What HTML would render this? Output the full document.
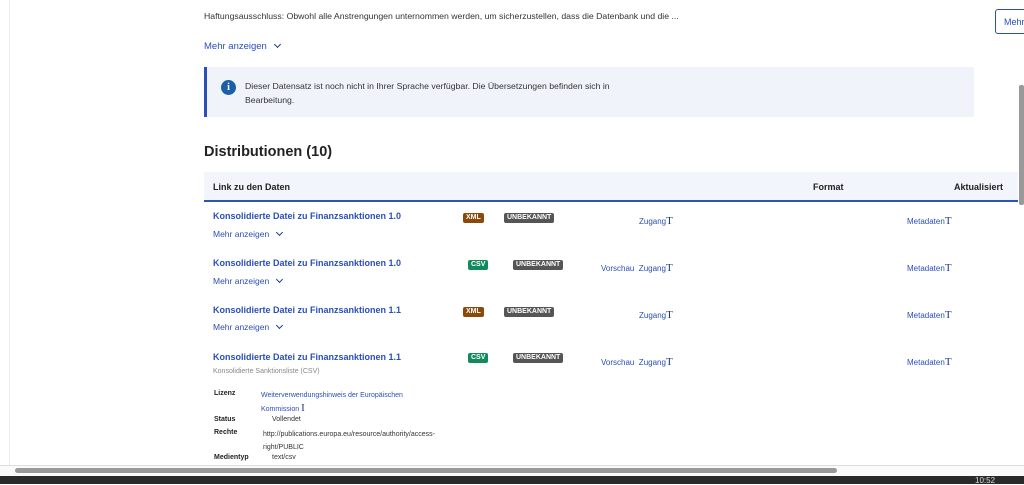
<!DOCTYPE html>
<html><head><meta charset="utf-8"><style>
*{margin:0;padding:0;box-sizing:border-box}
body{width:1024px;height:484px;overflow:hidden;background:#fff;font-family:"Liberation Sans",sans-serif;position:relative;color:#222}
.a{position:absolute;white-space:nowrap}
.lnk{color:#2a4fb8}
.t{font-size:8px;color:#2a4fb8}
.ttl{font-size:9px;font-weight:bold;color:#2a4fb8}
.bdg{font-size:7px;font-weight:bold;color:#fff;border-radius:2px;padding:1px 3px;line-height:8px}
.xml{background:#8a4a0c}.csv{background:#138a5e}.unk{background:#555}
.chev{display:inline-block;width:5px;height:5px;border-right:1.5px solid #1d3a8a;border-bottom:1.5px solid #1d3a8a;transform:rotate(45deg);margin-left:8px;position:relative;top:-2px}
.cur{font-family:"Liberation Serif",serif;font-size:11px;color:#1d3a8a}
.lbl{font-size:7px;font-weight:bold;color:#222}
.val{font-size:7px;color:#333}
</style></head><body>
<div class="a" style="left:9px;top:0;width:1px;height:466px;background:#eee"></div>
<div class="a" style="left:204px;top:11px;font-size:8.7px;color:#333">Haftungsausschluss: Obwohl alle Anstrengungen unternommen werden, um sicherzustellen, dass die Datenbank und die ...</div>
<div class="a" style="left:995px;top:9px;width:40px;height:25px;border:1.5px solid #2a4fb8;border-radius:3px;font-size:9px;color:#2a4fb8;padding:7px 0 0 8px">Mehr</div>
<div class="a lnk" style="left:204px;top:41px;font-size:9.5px">Mehr anzeigen<span class="chev"></span></div>
<div class="a" style="left:204px;top:67px;width:770px;height:50px;background:#f0f4fa;border-left:3px solid #2a4fb8"></div>
<div class="a" style="left:221px;top:80px;width:15px;height:15px;border-radius:50%;background:#1a5fa8;color:#fff;font-size:10px;font-weight:bold;text-align:center;line-height:15px;font-family:'Liberation Serif',serif">i</div>
<div class="a" style="left:245px;top:79px;font-size:8.7px;color:#333;line-height:14px">Dieser Datensatz ist noch nicht in Ihrer Sprache verfügbar. Die Übersetzungen befinden sich in<br>Bearbeitung.</div>
<div class="a" style="left:204px;top:144px;font-size:14.5px;font-weight:bold;color:#222">Distributionen (10)</div>
<div class="a" style="left:204px;top:172px;width:814px;height:30px;background:#f2f5fb;border-bottom:2px solid #2a56b8"></div>
<div class="a" style="left:213px;top:182px;font-size:9px;font-weight:bold">Link zu den Daten</div>
<div class="a" style="left:813px;top:182px;font-size:9px;font-weight:bold">Format</div>
<div class="a" style="left:954px;top:182px;font-size:9px;font-weight:bold">Aktualisiert</div>

<div class="a ttl" style="left:213px;top:211px">Konsolidierte Datei zu Finanzsanktionen 1.0</div>
<div class="a bdg xml" style="left:463px;top:213px">XML</div>
<div class="a bdg unk" style="left:504px;top:213px">UNBEKANNT</div>
<div class="a t" style="left:639px;top:215px">Zugang<span class="cur">T</span></div>
<div class="a t" style="left:907px;top:215px">Metadaten<span class="cur">T</span></div>
<div class="a t" style="left:213px;top:229px;font-size:8.5px">Mehr anzeigen<span class="chev"></span></div>

<div class="a ttl" style="left:213px;top:258px">Konsolidierte Datei zu Finanzsanktionen 1.0</div>
<div class="a bdg csv" style="left:468px;top:260px">CSV</div>
<div class="a bdg unk" style="left:513px;top:260px">UNBEKANNT</div>
<div class="a t" style="left:601px;top:262px">Vorschau&nbsp;&nbsp;Zugang<span class="cur">T</span></div>
<div class="a t" style="left:907px;top:262px">Metadaten<span class="cur">T</span></div>
<div class="a t" style="left:213px;top:276px;font-size:8.5px">Mehr anzeigen<span class="chev"></span></div>

<div class="a ttl" style="left:213px;top:305px">Konsolidierte Datei zu Finanzsanktionen 1.1</div>
<div class="a bdg xml" style="left:463px;top:307px">XML</div>
<div class="a bdg unk" style="left:504px;top:307px">UNBEKANNT</div>
<div class="a t" style="left:639px;top:309px">Zugang<span class="cur">T</span></div>
<div class="a t" style="left:907px;top:309px">Metadaten<span class="cur">T</span></div>
<div class="a t" style="left:213px;top:322px;font-size:8.5px">Mehr anzeigen<span class="chev"></span></div>

<div class="a ttl" style="left:213px;top:352px">Konsolidierte Datei zu Finanzsanktionen 1.1</div>
<div class="a bdg csv" style="left:468px;top:353px">CSV</div>
<div class="a bdg unk" style="left:513px;top:353px">UNBEKANNT</div>
<div class="a t" style="left:601px;top:356px">Vorschau&nbsp;&nbsp;Zugang<span class="cur">T</span></div>
<div class="a t" style="left:907px;top:356px">Metadaten<span class="cur">T</span></div>
<div class="a" style="left:213px;top:368px;font-size:7px;color:#888">Konsolidierte Sanktionsliste (CSV)</div>
<div class="a lbl" style="left:214px;top:390px">Lizenz</div>
<div class="a t" style="left:261px;top:389px;font-size:7px;line-height:13px">Weiterverwendungshinweis der Europäischen<br>Kommission <span class="cur">I</span></div>
<div class="a lbl" style="left:214px;top:416px">Status</div>
<div class="a val" style="left:272px;top:416px">Vollendet</div>
<div class="a lbl" style="left:214px;top:429px">Rechte</div>
<div class="a val" style="left:263px;top:428px;line-height:13px">http://publications.europa.eu/resource/authority/access-<br>right/PUBLIC</div>
<div class="a lbl" style="left:214px;top:454px">Medientyp</div>
<div class="a val" style="left:272px;top:454px">text/csv</div>

<div class="a" style="left:1019px;top:85px;width:5px;height:120px;background:#999;border-radius:2px"></div>
<div class="a" style="left:0;top:465px;width:1024px;height:11px;background:#fafafa;border-top:1px solid #ddd"></div>
<div class="a" style="left:15px;top:468px;width:822px;height:5px;background:#999;border-radius:3px"></div>
<div class="a" style="left:0;top:476px;width:1024px;height:8px;background:#2a2a2a"></div>
<div class="a" style="left:975px;top:476px;font-size:8px;color:#ddd">10:52</div>
</body></html>
